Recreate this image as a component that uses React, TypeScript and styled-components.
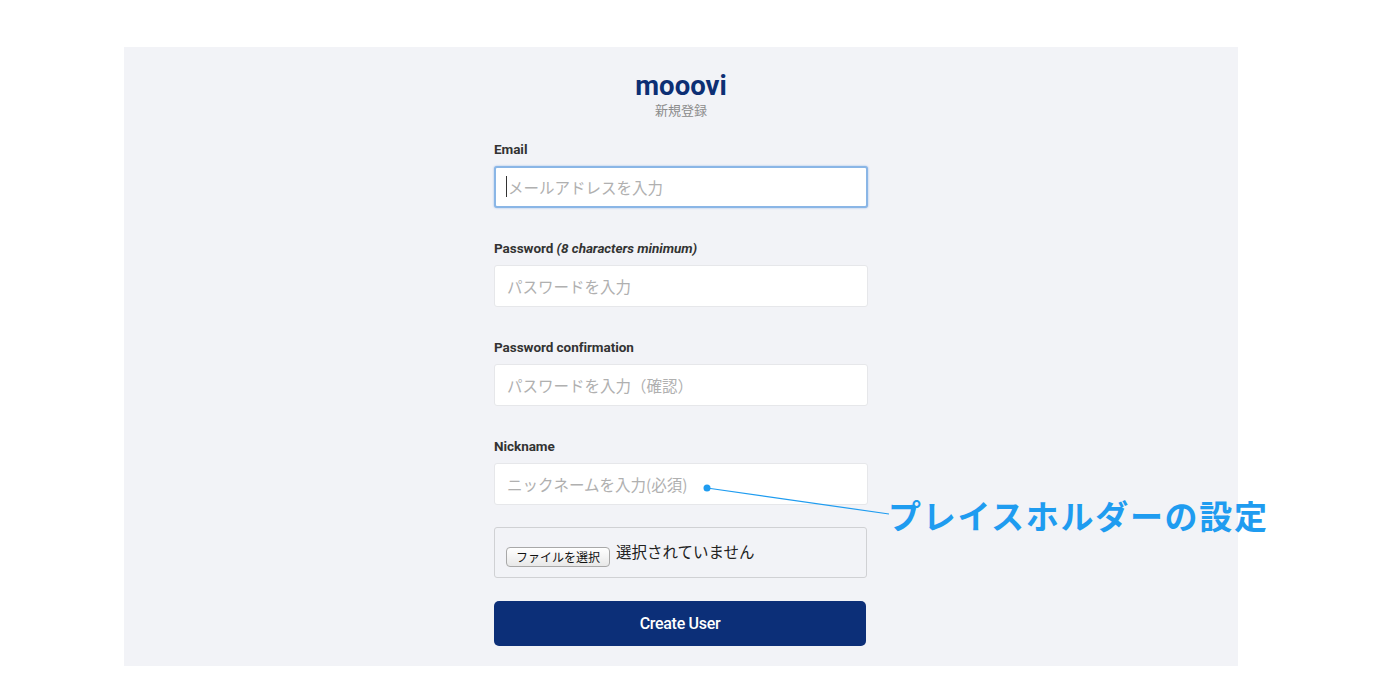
import React from "react";
import styled, { createGlobalStyle } from "styled-components";

const Global = createGlobalStyle`
  html, body { margin: 0; padding: 0; background: #ffffff; }
  body { font-family: Roboto, "Noto Sans CJK JP", sans-serif; }
  * { box-sizing: border-box; }
`;

const Page = styled.div`
  width: 1376px;
  height: 698px;
  padding-top: 47px;
`;

const Panel = styled.div`
  position: relative;
  margin-left: 124px;
  width: 1114px;
  height: 619px;
  background: #f2f3f7;
  padding-top: 25px;
  display: flex;
  flex-direction: column;
  align-items: center;
`;

const Title = styled.h1`
  margin: 0;
  font-family: Roboto, sans-serif;
  font-weight: 700;
  font-size: 27.5px;
  line-height: 28px;
  color: #0d2f74;
`;

const Subtitle = styled.div`
  font-family: "Noto Sans CJK JP", sans-serif;
  font-size: 13px;
  line-height: 16px;
  color: #8c8c8c;
  margin-top: 2px;
`;

const Form = styled.form`
  width: 374px;
  margin-top: 22px;
  display: flex;
  flex-direction: column;
`;

const Field = styled.div`
  display: flex;
  flex-direction: column;
  margin-bottom: 31px;
`;

const Label = styled.label`
  font-family: Roboto, sans-serif;
  font-weight: 700;
  font-size: 13.5px;
  line-height: 18px;
  color: #333333;
  letter-spacing: -0.05px;
  margin-bottom: 8px;
  em { font-style: italic; font-weight: 700; }
`;

const InputWrap = styled.div`
  position: relative;
`;

const Input = styled.input<{ $focused?: boolean }>`
  width: 100%;
  height: 42px;
  padding: 0 12px;
  border-radius: 3px;
  background: #ffffff;
  font-family: "Noto Sans CJK JP", sans-serif;
  font-size: 15.5px;
  outline: none;
  border: ${(p) => (p.$focused ? "2px solid #8ab6e6" : "1px solid #e6e7ea")};
  box-shadow: ${(p) => (p.$focused ? "0 0 2px rgba(80,140,220,0.6)" : "none")};
  &::placeholder { color: #b0b0b0; }
`;

const Caret = styled.span`
  position: absolute;
  left: 12px;
  top: 10px;
  width: 1px;
  height: 21px;
  background: #333;
`;

const FileBox = styled.div`
  width: 373px;
  height: 51px;
  margin-top: -9px;
  border: 1px solid #d0d1d4;
  border-radius: 3px;
  padding: 19px 0 0 11px;
  display: flex;
  align-items: flex-start;
  gap: 6px;
  align-self: flex-start;
`;

const FileButton = styled.button`
  height: 20px;
  padding: 0 9px;
  font-family: "Noto Sans CJK JP", sans-serif;
  font-size: 12px;
  line-height: 18px;
  color: #111;
  border: 1px solid #a8a8a8;
  border-radius: 4px;
  background: linear-gradient(#ffffff, #e8e8e8);
`;

const FileText = styled.span`
  font-family: "Noto Sans CJK JP", sans-serif;
  font-size: 15.5px;
  line-height: 20px;
  color: #222;
  margin-top: -6px;
`;

const Submit = styled.button`
  width: 372px;
  height: 45px;
  margin-top: 23px;
  border: none;
  border-radius: 5px;
  background: #0c2f78;
  color: #ffffff;
  font-family: Roboto, sans-serif;
  font-weight: 500;
  font-size: 16px;
  letter-spacing: -0.3px;
`;

const Annotation = styled.div`
  position: absolute;
  left: 0;
  top: 0;
  width: 100%;
  height: 100%;
  pointer-events: none;
`;

const Lines = styled.svg`
  position: absolute;
  left: 0;
  top: 0;
`;

const Note = styled.div`
  position: absolute;
  left: 764px;
  top: 448px;
  font-family: "Noto Sans CJK JP", sans-serif;
  font-weight: 700;
  font-size: 33px;
  line-height: 40px;
  color: #1f9cf0;
  letter-spacing: 1.7px;
  white-space: nowrap;
`;

const fields = [
  { label: <>Email</>, placeholder: "メールアドレスを入力", focused: true },
  { label: <>Password <em>(8 characters minimum)</em></>, placeholder: "パスワードを入力" },
  { label: <>Password confirmation</>, placeholder: "パスワードを入力（確認）" },
  { label: <>Nickname</>, placeholder: "ニックネームを入力(必須)" },
];

export default function App() {
  return (
    <Page>
      <Global />
      <Panel>
        <Title>mooovi</Title>
        <Subtitle>新規登録</Subtitle>
        <Form onSubmit={(e) => e.preventDefault()}>
          {fields.map((f, i) => (
            <Field key={i}>
              <Label>{f.label}</Label>
              <InputWrap>
                <Input placeholder={f.placeholder} $focused={f.focused} />
                {f.focused && <Caret />}
              </InputWrap>
            </Field>
          ))}
          <FileBox>
            <FileButton type="button">ファイルを選択</FileButton>
            <FileText>選択されていません</FileText>
          </FileBox>
          <Submit type="submit">Create User</Submit>
        </Form>
        <Annotation>
          <Lines width="1114" height="619">
            <line x1="583" y1="441" x2="765" y2="467" stroke="#1f9cf0" strokeWidth="1.2" />
            <circle cx="583" cy="441" r="3.5" fill="#1f9cf0" />
          </Lines>
          <Note>プレイスホルダーの設定</Note>
        </Annotation>
      </Panel>
    </Page>
  );
}
